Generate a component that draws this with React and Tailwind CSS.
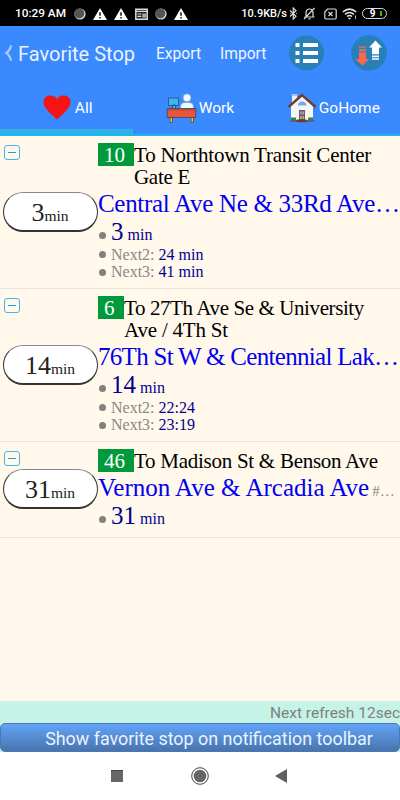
import React from 'react';

const stops = [
  {
    route: '10',
    badge: 'w-9',
    headsign: [
      { text: 'To Northtown Transit Center', tracking: 'tracking-[-0.22px]' },
      { text: 'Gate E', tracking: 'tracking-[-0.3px]' },
    ],
    name: 'Central Ave Ne & 33Rd Ave…',
    nameTracking: 'tracking-[-0.3px]',
    minutes: 3,
    next: ['24 min', '41 min'],
  },
  {
    route: '6',
    badge: 'w-[26px]',
    headsign: [
      { text: 'To 27Th Ave Se & University', tracking: 'tracking-[-0.4px]' },
      { text: 'Ave / 4Th St', tracking: 'tracking-[-0.2px]' },
    ],
    name: '76Th St W & Centennial Lak…',
    nameTracking: 'tracking-[-0.7px]',
    minutes: 14,
    next: ['22:24', '23:19'],
  },
  {
    route: '46',
    badge: 'w-9',
    headsign: [{ text: 'To Madison St & Benson Ave', tracking: 'tracking-[-0.27px]' }],
    name: 'Vernon Ave & Arcadia Ave',
    nameTracking: 'tracking-[0px]',
    suffix: '#…',
    minutes: 31,
    next: [],
  },
];

const WarningIcon = () => (
  <svg width="14" height="12" viewBox="0 0 14 12">
    <path d="M7 0 14 12H0Z" fill="#fff" />
    <path d="M7 4.3v3.4M7 9v1.4" stroke="#000" strokeWidth="1.4" />
  </svg>
);

const DotIcon = () => (
  <svg width="12" height="12" viewBox="0 0 12 12">
    <circle cx="6" cy="6" r="5.6" fill="#ddd" />
    <circle cx="5.3" cy="5.4" r="5" fill="#555" />
  </svg>
);

const CalendarIcon = () => (
  <svg width="13" height="12" viewBox="0 0 13 12">
    <path d="M.8 1.2h11.4v10H.8Z" fill="#222" stroke="#ddd" strokeWidth="1.5" />
    <path d="M1 3.4h11M2.5 6h3.8M2.5 8.4h3.8" stroke="#ddd" strokeWidth="1.2" />
    <path d="M7.3 5.5H11v4.2H7.3Z" fill="#aaa" />
  </svg>
);

const StatusBar = () => (
  <div className="flex h-[26px] items-center bg-black pl-[15px] pr-[13px] pt-[1px] text-white">
    <span className="w-[59px] whitespace-nowrap text-[11.8px] font-medium">10:29 AM</span>
    <div className="flex items-center gap-[7px]">
      <DotIcon />
      <WarningIcon />
      <WarningIcon />
      <CalendarIcon />
      <DotIcon />
      <WarningIcon />
    </div>
    <span className="ml-auto whitespace-nowrap pt-[1px] text-[11px] font-medium">10.9KB/s</span>
    <svg className="ml-[2px]" width="9" height="13" viewBox="0 0 9 13" fill="none" stroke="#ddd" strokeWidth="1.2">
      <path d="M1 3.5 7 9.3 4.3 12V1L7 3.7 1 9.5" />
      <path d="M1 6.5h.6M7.4 6.5H8" strokeWidth="1.4" />
    </svg>
    <svg className="ml-[5px]" width="13" height="13" viewBox="0 0 13 13" fill="none" stroke="#ddd" strokeWidth="1.2">
      <path d="M1.5 10h10M3 10V6q0-4 3.5-4T10 6v4M5.5 11.8h2M1 12 11.5 1" />
    </svg>
    <svg className="ml-[8px]" width="13" height="12" viewBox="0 0 13 12" fill="none" stroke="#ddd" strokeWidth="1.2">
      <path d="M3.5 1H11q1.2 0 1.2 1.2v7.6Q12.2 11 11 11H2Q.8 11 .8 9.8V4Z" />
      <path d="m4.5 4 4 4m0-4-4 4" />
    </svg>
    <svg className="ml-[5px]" width="15" height="12" viewBox="0 0 15 12" fill="none" stroke="#e5e5e5" strokeWidth="1.5">
      <path d="M.8 4Q7.5-1.8 14.2 4M3 6.3q4.5-3.7 9 0M5 8.5q2.5-2 5 0" />
      <path d="m7.5 11.5-1.5-1.6h3Z" fill="#e5e5e5" strokeWidth=".3" />
      <path d="M13.5 7.5v3.5" strokeWidth=".8" />
    </svg>
    <div className="ml-[5px] flex h-[11px] w-[25px] items-center justify-center rounded-full border border-[#ddd] text-[10px] font-bold leading-none">
      <span className="ml-[3px]">9</span>
      <span className="ml-[5px] h-[5px] w-[2px] bg-[#40b51a]" />
    </div>
  </div>
);

const TitleBar = () => (
  <div className="flex h-[54px] items-center">
    <svg className="ml-[4px]" width="9" height="16" viewBox="0 0 9 16">
      <path d="M6 .3h2.3Q7.7 5 4.3 8q3.4 3 4 7.7H6Q5 11 .5 8 5 5 6 .3Z" fill="#a6c8ff" />
    </svg>
    <h1 className="ml-[5px] w-[138px] whitespace-nowrap pt-[2px] text-[20px] text-[#eaf2ff]">Favorite Stop</h1>
    <span className="w-[64px] pt-[3px] text-[15.6px] text-[#f1f6ff]">Export</span>
    <span className="w-[69px] pt-[3px] text-[15.6px] text-[#f1f6ff]">Import</span>
    <svg width="35" height="36" viewBox="0 0 35 36">
      <circle cx="17.5" cy="18" r="17.5" fill="#297fb8" />
      <path
        d="M6.5 8h4v4h-4zM6.5 16h4v4h-4zM6.5 24h4v4h-4zM14 8h15v4H14zM14 16h15v4H14zM14 24h15v4H14z"
        fill="#fff"
      />
    </svg>
    <svg className="ml-[27px]" width="36" height="36" viewBox="0 0 36 36">
      <circle cx="18" cy="18" r="17.8" fill="#297fb8" />
      <path d="M8 11.5h7v1.3H8zM8 14.2h7v2.3H8zM8 17.5h7V24h3l-6.7 6.7L4.5 24H8z" fill="#fc6650" />
      <path d="m24.5 5.5 6.5 7h-3v6.8h-7v-6.8h-3zM21 20.5h7v1.7h-7zM21 23.3h7v1.4h-7z" fill="#fff" />
    </svg>
  </div>
);

const HeartIcon = () => (
  <svg width="28" height="25" viewBox="0 0 28 25">
    <path
      d="M14 24.5C10 20 .5 14 .5 7.2.5 3 3.5.5 7.5.5c3 0 5.3 1.2 6.500 3.800C15.200 1.700 17.500.500 20.500.500c4 0 7 2.500 7 6.700C27.500 14 18 20 14 24.500Z"
      fill="#f51414"
    />
  </svg>
);

const DeskIcon = () => (
  <svg width="31" height="31" viewBox="0 0 31 31" stroke="#3b4560" strokeWidth=".8">
    <path d="M4 24h2.5v5.5H4zM25 24h2.5v5.5H25z" fill="#f5c518" />
    <circle cx="21" cy="4.8" r="4" fill="#eefbff" stroke="#6f9fd0" />
    <path d="M14.5 15.5V14q0-4.5 4.5-4.5h4q4.5 0 4.5 4.5v1.5Z" fill="#e9faff" stroke="#6f9fd0" />
    <path d="M6.500 12h3v3.500h-3zM2.500 5h10v7.500h-10z" fill="#38b7f5" />
    <path d="M1.200 15.500h28.600v9H1.200Z" fill="#e9553a" />
    <path d="M1.200 16.800h28.600" stroke="#a53f32" />
  </svg>
);

const HouseIcon = () => (
  <svg width="30" height="30" viewBox="0 0 30 30">
    <path d="M5 2.500h5V10H5z" fill="#f1eeee" />
    <path d="M4.500 1.800h6" stroke="#ddd" />
    <path d="M4 13 15 3l11 10v14H4Z" fill="#f5f5f7" />
    <path d="M1.500 14 15 2l13.500 12" fill="none" stroke="#70402c" strokeWidth="2.400" />
    <path d="M11 12.500q0-4 4-4t4.500 4Z" fill="#74a8f5" />
    <path d="M12 17h6v10h-6Z" fill="#765650" />
    <path d="M13.300 18.500h1.300v3h-1.300zM15.600 18.500h1.200v3h-1.200zM13.300 23h1.300v3h-1.300zM15.600 23h1.200v3h-1.200z" fill="#b8c6d8" />
    <path d="M3 27.500h24v1H3z" fill="#75391e" />
    <path d="M9.500 26.500h10v2.700h-10z" fill="#75391e" />
    <path d="M4 24.500h5V27H4zM21 24.500h5V27h-5z" fill="#278f39" />
  </svg>
);

const Tabs = () => (
  <div className="grid h-[54px] grid-cols-3 text-[15.5px] text-white">
    <div className="flex items-center justify-center gap-[4px] border-b-[5px] border-[#30b0e6] pl-[2px] pt-[5px]">
      <HeartIcon />
      <span className="pt-[4px]">All</span>
    </div>
    <div className="flex items-center justify-center gap-[2px] pt-[2px]">
      <DeskIcon />
      <span className="pt-[2px]">Work</span>
    </div>
    <div className="flex items-center justify-center gap-[2px] pt-[2px]">
      <HouseIcon />
      <span className="pt-[2px]">GoHome</span>
    </div>
  </div>
);

const Bullet = () => <span className="mr-[5px] h-[7px] w-[7px] shrink-0 rounded-full bg-[#808080]" />;

const StopRow = ({ stop }) => (
  <div className="flex border-b border-[#e6e3da] pb-[7px] pt-[7px]">
    <div className="relative flex w-[98px] shrink-0 items-center pb-[1px] pl-[3px]">
      <button className="absolute left-[4px] top-[2px] flex h-[15px] w-[16px] items-center justify-center rounded-[3px] border border-[#46b5e8]">
        <span className="h-[1.5px] w-[8px] bg-[#10a5e8]" />
      </button>
      <div className="flex h-[40px] w-[95px] items-baseline justify-center rounded-full border border-b-2 border-[#333] border-t-[#888] bg-white pr-[1px] leading-[40px] text-[#222]">
        <span className="text-[26px]">{stop.minutes}</span>
        <span className="text-[15.5px]">min</span>
      </div>
    </div>

    <div className="w-[302px] whitespace-nowrap">
      <div className="flex text-[21px] text-black">
        <span className={`h-[23px] shrink-0 bg-[#009a3d] pl-[6px] leading-[25px] text-white ${stop.badge}`}>
          {stop.route}
        </span>
        <div className="pb-[1px]">
          {stop.headsign.map((line) => (
            <div key={line.text} className={`h-[22px] leading-[25px] ${line.tracking}`}>
              {line.text}
            </div>
          ))}
        </div>
      </div>
      <div className="flex h-[28px] items-baseline leading-[32px] text-[#0000ee]">
        <span className={`text-[25px] ${stop.nameTracking}`}>{stop.name}</span>
        {stop.suffix && <span className="ml-[3px] text-[15px] text-[#888]">{stop.suffix}</span>}
      </div>
      <div className="flex h-[30px] items-center pl-[1px] pt-[4px] text-[#00008f]">
        <div className="flex pt-[5px]">
          <Bullet />
        </div>
        <div className="flex items-baseline gap-[4px] leading-[29px]">
          <span className="text-[25px]">{stop.minutes}</span>
          <span className="text-[16px]">min</span>
        </div>
      </div>
      {stop.next.map((time, i) => (
        <div key={time} className="flex h-[17.5px] items-center pl-[1px] text-[16px] leading-[18px]">
          <Bullet />
          <span className="mr-[4px] text-[#888]">Next{i + 2}:</span>
          <span className="text-[#00008f]">{time}</span>
        </div>
      ))}
    </div>
  </div>
);

const NavBar = () => (
  <div className="flex h-[48px] items-center bg-white">
    <span className="ml-[111px] h-[12px] w-[12px] border-t border-[#444] bg-[#666]" />
    <svg className="ml-[68px]" width="18" height="18" viewBox="0 0 18 18">
      <circle cx="9" cy="9" r="8.3" fill="none" stroke="#444" />
      <circle cx="9" cy="9" r="6.3" fill="#666" />
    </svg>
    <svg className="ml-[66px]" width="12" height="14" viewBox="0 0 12 14">
      <path d="M12 0v14L0 7Z" fill="#606060" />
    </svg>
  </div>
);

export default function App() {
  return (
    <div className="flex h-[800px] w-[400px] flex-col overflow-hidden bg-[#fff8eb] font-['Roboto',sans-serif]">
      <StatusBar />
      <header className="border-b-2 border-[#16b9ee] bg-[#3a89ff]">
        <TitleBar />
        <Tabs />
      </header>
      <main className="flex-1 font-['Liberation_Serif',serif]">
        {stops.map((stop) => (
          <StopRow key={stop.route} stop={stop} />
        ))}
      </main>
      <footer>
        <div className="bg-[#c5f4e6]">
          <div className="h-[22px] text-right text-[15.5px] leading-[24px] text-[#808080]">Next refresh 12sec</div>
          <button className="block h-[29px] w-full rounded-[5px] border border-[#4a78b5] bg-linear-to-b from-[#62a4fa] to-[#4974ad] pl-[18px] text-center text-[17.9px] leading-[29px] text-[#eaf3ff]">
            Show favorite stop on notification toolbar
          </button>
        </div>
        <NavBar />
      </footer>
    </div>
  );
}
